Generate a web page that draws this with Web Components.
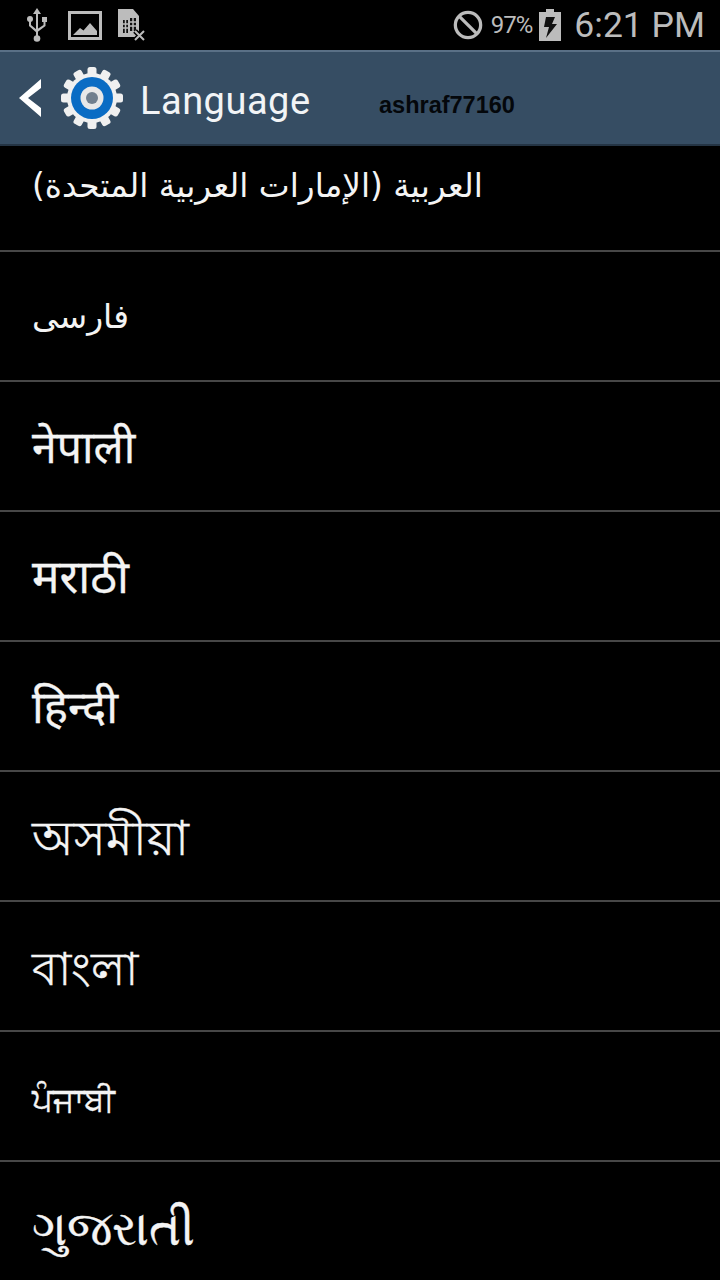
<!DOCTYPE html>
<html>
<head>
<meta charset="utf-8">
<style>
  html, body { margin: 0; padding: 0; background: #000; }
  body { width: 720px; height: 1280px; overflow: hidden; font-family: Roboto, "DejaVu Sans", sans-serif; }
</style>
</head>
<body>
<settings-screen>
  <status-bar></status-bar>
  <action-bar title="Language" watermark="ashraf77160"></action-bar>
  <language-list>
    <language-row first rtl size="32.800">العربية (الإمارات العربية المتحدة)</language-row>
    <language-row rtl size="33">فارسی</language-row>
    <language-row size="44.500" shift="-2">नेपाली</language-row>
    <language-row size="46" shift="-2">मराठी</language-row>
    <language-row size="45.500" shift="-2">हिन्दी</language-row>
    <language-row size="47.500" shift="11">অসমীয়া</language-row>
    <language-row size="46" shift="11">বাংলা</language-row>
    <language-row size="32.500" shift="8">ਪੰਜਾਬੀ</language-row>
    <language-row size="48" shift="6">ગુજરાતી</language-row>
  </language-list>
</settings-screen>
<script>
class SettingsScreen extends HTMLElement {
  constructor() {
    super();
    this.attachShadow({ mode: "open" }).innerHTML = `
    <style>
      :host { display: flex; flex-direction: column; height: 1280px; overflow: hidden; background: #000; }
    </style>
    <slot></slot>`;
  }
}

class StatusBar extends HTMLElement {
  constructor() {
    super();
    this.attachShadow({ mode: "open" }).innerHTML = `
    <style>
      :host { display: flex; align-items: center; height: 50px; flex: none; background: #000; color: #bcbcbc; padding: 0 15px 0 27px; box-sizing: border-box; }
      svg { display: block; flex: none; }
      .left { display: flex; align-items: center; gap: 21px; }
      .right { display: flex; align-items: center; margin-left: auto; }
      .pct { font-size: 24px; letter-spacing: -1px; margin: 0 7px 0 8px; }
      .time { font-size: 35.500px; margin-left: 13px; line-height: 50px; }
    </style>
    <div class="left">
      <svg width="20" height="34" viewBox="0 0 20 34" fill="#bcbcbc">
        <path d="M10 0l4 6h-3v23H9V6H6z"/>
        <circle cx="10" cy="30.500" r="3.300"/>
        <circle cx="3" cy="11" r="3"/>
        <rect x="15" y="9" width="5" height="5"/>
        <path d="M2 12h2v5l6 5v3l-8-7z"/>
        <path d="M16.500 13h2v5l-8 6v-3l6-4z"/>
      </svg>
      <svg width="34" height="29" viewBox="0 0 34 29" style="margin-right:-5px">
        <rect x="1.500" y="1.500" width="31" height="26" fill="none" stroke="#bcbcbc" stroke-width="3"/>
        <path d="M5 24l7-7 3.500 2.500L22 12l7 8v4z" fill="#bcbcbc"/>
      </svg>
      <svg width="30" height="32" viewBox="0 0 30 32" style="margin-left:-1px">
        <path d="M1 0h15l6 7v21H1z" fill="#bcbcbc"/>
        <path d="M6 11h5v13H6zM13 9h6v13h-6z" fill="#111"/>
        <path d="M8.500 11v13M6 15h5M6 19h5M16 9v13M13 13h6M13 17h6" stroke="#bcbcbc" stroke-width="1.500"/>
        <path d="M18 22l9 9M27 22l-9 9" stroke="#000" stroke-width="5"/>
        <path d="M18 22l9 9M27 22l-9 9" stroke="#bcbcbc" stroke-width="2"/>
      </svg>
    </div>
    <div class="right">
      <svg width="30" height="30" viewBox="0 0 32 32" fill="none" stroke="#bcbcbc" stroke-width="3.500">
        <circle cx="16" cy="16" r="13.500"/>
        <path d="M6.500 6.500l19 19"/>
      </svg>
      <span class="pct">97%</span>
      <svg width="22" height="32" viewBox="0 0 22 32">
        <path d="M7 0h8v3h7v29H0V3h7z" fill="#bcbcbc"/>
        <path d="M7 8h9l-3 7h5L7 29l3-11H5z" fill="#111"/>
      </svg>
      <span class="time">6:21 PM</span>
    </div>`;
  }
}

class ActionBar extends HTMLElement {
  constructor() {
    super();
    this.attachShadow({ mode: "open" }).innerHTML = `
    <style>
      :host { display: flex; align-items: center; height: 96px; flex: none; box-sizing: border-box; background: #364d63; border-top: 2px solid #5a7086; border-bottom: 2px solid #243444; position: relative; padding-left: 18px; }
      svg { display: block; flex: none; }
      .gear { margin-left: 18px; }
      .title { font-size: 38px; color: #f2f4f6; margin-left: 16px; letter-spacing: 0.5px; padding-top: 5px; }
      .mark { position: absolute; left: 379px; top: 40px; font: bold 23.500px/26px "Liberation Sans", Arial, sans-serif; color: #04070b; }
    </style>
    <svg width="24" height="40" viewBox="0 0 24 40"><path d="M23 1v9L10 20l13 10v9L1 20z" fill="#fff"/></svg>
    <svg class="gear" width="64" height="64" viewBox="-32 -32 64 64">
      <g fill="#f0f0f0" id="g"></g>
      <circle r="25" fill="#f0f0f0"/>
      <circle r="21" fill="#0a6cc4"/>
      <circle r="11.500" fill="#e8e8e8"/>
      <circle r="6" fill="#717f8e"/>
    </svg>
    <span class="title"></span>
    <span class="mark"></span>`;
    const g = this.shadowRoot.getElementById("g");
    let teeth = "";
    for (let i = 0; i < 12; i++) {
      teeth += `<rect x="-4.500" y="-31" width="9" height="10" rx="2.500" transform="rotate(${i * 30})"/>`;
    }
    g.innerHTML = teeth;
  }

  connectedCallback() {
    this.shadowRoot.querySelector(".title").textContent = this.getAttribute("title");
    this.shadowRoot.querySelector(".mark").textContent = this.getAttribute("watermark");
  }
}

class LanguageList extends HTMLElement {
  constructor() {
    super();
    this.attachShadow({ mode: "open" }).innerHTML = `
    <style>
      :host { display: flex; flex-direction: column; flex: 1; min-height: 0; overflow: hidden; }
    </style>
    <slot></slot>`;
  }
}

class LanguageRow extends HTMLElement {
  constructor() {
    super();
    this.attachShadow({ mode: "open" }).innerHTML = `
    <style>
      :host { display: flex; align-items: center; flex: none; height: 130px; box-sizing: border-box; border-bottom: 2px solid #474747; padding: 0 32px; color: #f4f4f4; font-family: Roboto, "Noto Sans", sans-serif; -webkit-text-stroke: 0.3px #f4f4f4; }
      :host([rtl]) { font-family: "DejaVu Sans", sans-serif; -webkit-text-stroke: 0; }
      :host([first]) { height: 106px; padding-bottom: 24px; }
      span { display: block; white-space: nowrap; }
    </style>
    <span><slot></slot></span>`;
  }

  connectedCallback() {
    const span = this.shadowRoot.querySelector("span");
    this.style.fontSize = this.getAttribute("size") + "px";
    span.style.marginTop = (this.getAttribute("shift") || 0) + "px";
    if (this.hasAttribute("rtl")) span.dir = "rtl";
  }
}

customElements.define("settings-screen", SettingsScreen);
customElements.define("status-bar", StatusBar);
customElements.define("action-bar", ActionBar);
customElements.define("language-list", LanguageList);
customElements.define("language-row", LanguageRow);
</script>
</body>
</html>
